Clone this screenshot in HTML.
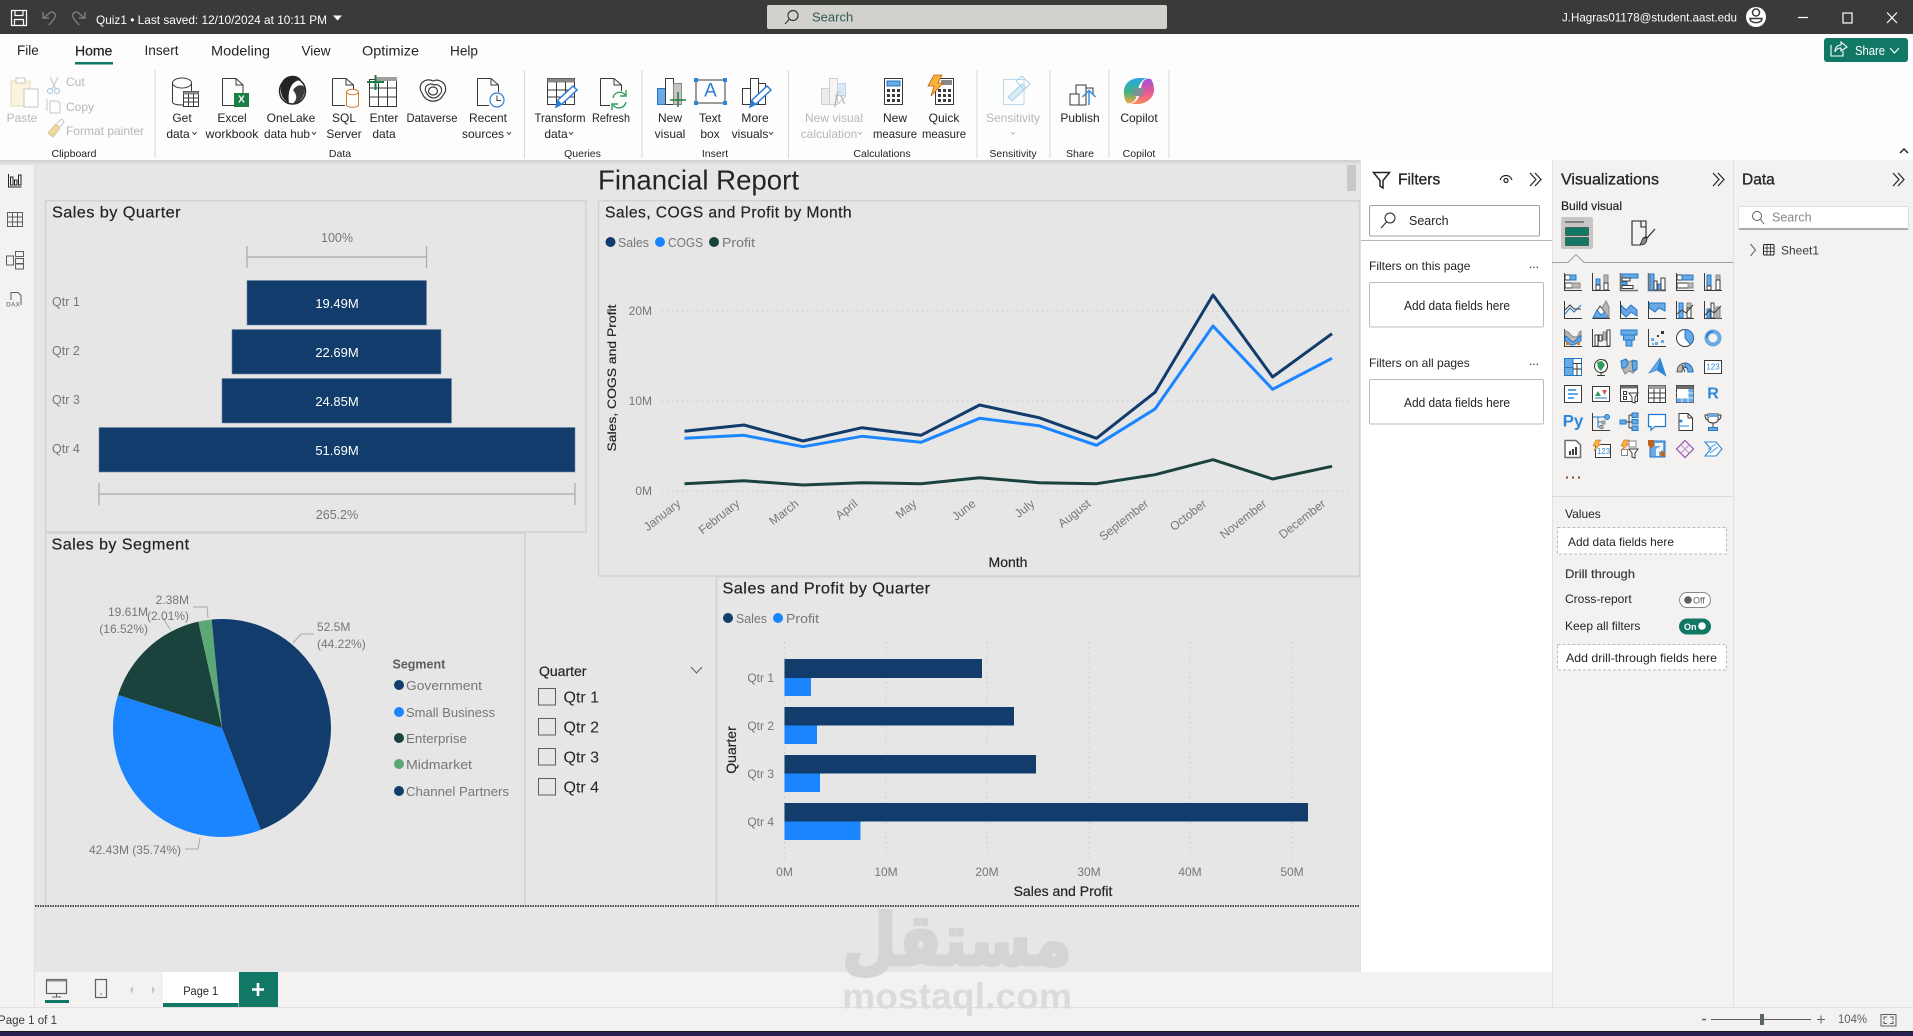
<!DOCTYPE html>
<html lang="en"><head><meta charset="utf-8"><title>Quiz1 - Power BI</title>
<style>
html,body{margin:0;padding:0;width:1913px;height:1036px;overflow:hidden;background:#e6e6e6}
svg{display:block}
text{font-family:"Liberation Sans","DejaVu Sans",sans-serif;dominant-baseline:central;fill:#252423;font-size:12px}
.c text,text.c{text-anchor:middle}
.d text,text.d{fill:#b9b7b5}
.gr text,text.gr{fill:#777}
.ttl{font-size:16px;fill:#252423;font-weight:400;letter-spacing:.4px}
.k{stroke:#3b3a39;fill:none;stroke-width:1}
.l{stroke:#3b3a39;fill:#fff;stroke-width:1}
.b{fill:#6aa9e4;stroke:#1f78c8;stroke-width:1}
.bb{fill:none;stroke:#1f78c8;stroke-width:1}
.g{fill:#b9b7b5;stroke:#8a8886;stroke-width:1}
.dis{stroke:#c8c6c4;fill:none;stroke-width:1}
.grid{stroke:#c9c9c9;stroke-width:1;stroke-dasharray:1.5 3.5;fill:none}
.fr{stroke:#d2d2d2;fill:none;stroke-width:1.5}
.br{stroke:#a8a8a8;fill:none;stroke-width:1.2}
</style></head><body>
<svg width="1913" height="1036" viewBox="0 0 1913 1036" xmlns="http://www.w3.org/2000/svg">
<defs>
<linearGradient id="sh" x1="0" y1="0" x2="0" y2="1"><stop offset="0" stop-color="#cfcfcf"/><stop offset="1" stop-color="#e6e6e6"/></linearGradient>
<linearGradient id="cp1" x1="0" y1="0" x2="0" y2="1"><stop offset="0" stop-color="#2aa7e8"/><stop offset=".55" stop-color="#3fb27f"/><stop offset="1" stop-color="#f4a83f"/></linearGradient>
<linearGradient id="cp2" x1="0" y1="0" x2="0" y2="1"><stop offset="0" stop-color="#9a55d8"/><stop offset=".5" stop-color="#e5559a"/><stop offset="1" stop-color="#f88a5a"/></linearGradient>
</defs>

<!-- base -->
<rect width="1913" height="1036" fill="#f3f2f1"/>
<rect x="35" y="160" width="1326" height="812" fill="#e6e6e6"/>
<rect x="0" y="160" width="1361" height="5" fill="url(#sh)"/>
<rect x="0" y="165" width="34" height="807" fill="#f3f2f1"/>
<path d="M34.5 165V1007" stroke="#e1dfdd"/>

<!-- title bar -->
<rect width="1913" height="34" fill="#3b3a39"/>
<g fill="none" stroke="#fff" stroke-width="1.2">
<path d="M11.5 10.5H26.5V25.5H11.5Z"/><path d="M15 10.5V15.5H23V10.5M14.5 25.5V19.5H23.5V25.5"/>
</g>
<g fill="none" stroke="#8a8886" stroke-width="1.2"><path d="M43 12V18H49M43.5 18L50 12.5C54 10.5 57 15 54 19L49 25"/><path d="M85 12V18H79M84.5 18L78 12.5C74 10.5 71 15 74 19L79 25"/></g>
<text x="96" y="20" style="fill:#fff" textLength="231" lengthAdjust="spacingAndGlyphs">Quiz1 • Last saved: 12/10/2024 at 10:11 PM</text>
<path d="M333 15.5H342L337.500 20.500Z" fill="#fff"/>
<rect x="767" y="5" width="400" height="24" rx="2" fill="#d2d1ce"/>
<circle cx="793" cy="15.500" r="5" fill="none" stroke="#3b3a39" stroke-width="1.2"/><path d="M789.500 19L785 24" stroke="#3b3a39" stroke-width="1.2"/>
<text x="812" y="17" style="fill:#335a55;font-size:13px">Search</text>
<text x="1562" y="17.500" style="fill:#fff" textLength="175" lengthAdjust="spacingAndGlyphs">J.Hagras01178@student.aast.edu</text>
<circle cx="1756" cy="17" r="10" fill="#fff"/><circle cx="1756" cy="12.500" r="3.500" fill="none" stroke="#3b3a39" stroke-width="1.500"/><path d="M1750 18.500H1762C1762 24 1750 24 1750 18.500Z" fill="none" stroke="#3b3a39" stroke-width="1.500"/>
<path d="M1798 17.500H1808" stroke="#fff" stroke-width="1.200"/>
<rect x="1843" y="13" width="9" height="10" fill="none" stroke="#fff" stroke-width="1.200"/>
<path d="M1887 12.500L1897 23M1897 12.500L1887 23" stroke="#fff" stroke-width="1.200"/>

<!-- ribbon -->
<rect y="34" width="1913" height="126" fill="#fdfdfd"/>
<text x="17" y="50.500" style="font-size:13.500px">File</text>
<text x="75" y="50.500" style="font-size:14px;stroke:#252423;stroke-width:.25">Home</text>
<text x="144.500" y="50.500" style="font-size:13.500px" textLength="34" lengthAdjust="spacingAndGlyphs">Insert</text>
<text x="211" y="50.500" style="font-size:14px" textLength="59" lengthAdjust="spacingAndGlyphs">Modeling</text>
<text x="301.500" y="50.500" style="font-size:14px" textLength="29" lengthAdjust="spacingAndGlyphs">View</text>
<text x="362" y="50.500" style="font-size:14px" textLength="57" lengthAdjust="spacingAndGlyphs">Optimize</text>
<text x="450" y="50.500" style="font-size:14px" textLength="28" lengthAdjust="spacingAndGlyphs">Help</text>
<rect x="75" y="62" width="38" height="2.500" fill="#117865"/>
<rect x="1824" y="38" width="84" height="24" rx="3" fill="#117865"/>
<g fill="none" stroke="#fff" stroke-width="1.100"><path d="M1831 45V56H1843V51"/><path d="M1835 52C1835 47 1838 45 1841 45V42L1847 47L1841 51V48C1838 48 1836 49 1835 52Z"/><path d="M1890 48L1894.500 53L1899 48"/></g>
<text x="1855" y="51" style="fill:#fff;font-size:12.500px" textLength="30" lengthAdjust="spacingAndGlyphs">Share</text>
<path d="M1900 153L1904 149L1908 153" fill="none" stroke="#252423" stroke-width="1.500"/>

<!-- ribbon dividers -->
<g stroke="#d9d8d6" stroke-width="1">
<path d="M155 70V158M524.500 70V158M642 70V158M788.500 70V158M977 70V158M1050 70V158M1109 70V158M1169 70V158"/>
</g>
<!-- group labels -->
<g class="c">
<text x="74" y="154" style="font-size:10.500px">Clipboard</text><text x="340" y="154" style="font-size:10.500px">Data</text><text x="582.500" y="154" style="font-size:10.500px">Queries</text><text x="715" y="154" style="font-size:10.500px">Insert</text><text x="882" y="154" style="font-size:10.500px">Calculations</text><text x="1013" y="154" style="font-size:10.500px">Sensitivity</text><text x="1080" y="154" style="font-size:10.500px">Share</text><text x="1139" y="154" style="font-size:10.500px">Copilot</text>
</g>
<!-- ribbon labels -->
<g class="c">
<text x="22" y="118" class="c d">Paste</text>
<text x="182" y="118">Get</text><text x="178" y="134">data</text>
<text x="232" y="118">Excel</text><text x="232" y="134" textLength="53" lengthAdjust="spacingAndGlyphs">workbook</text>
<text x="291" y="118">OneLake</text><text x="287" y="134" textLength="46" lengthAdjust="spacingAndGlyphs">data hub</text>
<text x="344" y="118">SQL</text><text x="344" y="134">Server</text>
<text x="384" y="118">Enter</text><text x="384" y="134">data</text>
<text x="432" y="118" textLength="51" lengthAdjust="spacingAndGlyphs">Dataverse</text>
<text x="488" y="118">Recent</text><text x="483" y="134">sources</text>
<text x="560" y="118" textLength="51" lengthAdjust="spacingAndGlyphs">Transform</text><text x="556" y="134">data</text>
<text x="611" y="118" textLength="38" lengthAdjust="spacingAndGlyphs">Refresh</text>
<text x="670" y="118">New</text><text x="670" y="134">visual</text>
<text x="710" y="118">Text</text><text x="710" y="134">box</text>
<text x="755" y="118">More</text><text x="750" y="134">visuals</text>
<text x="834" y="118" class="c d">New visual</text><text x="829" y="134" class="c d">calculation</text>
<text x="895" y="118">New</text><text x="895" y="134" textLength="44" lengthAdjust="spacingAndGlyphs">measure</text>
<text x="944" y="118">Quick</text><text x="944" y="134" textLength="44" lengthAdjust="spacingAndGlyphs">measure</text>
<text x="1013" y="118" class="c d">Sensitivity</text>
<text x="1080" y="118">Publish</text>
<text x="1139" y="118">Copilot</text>
</g>
<g fill="none" stroke="#3b3a39" stroke-width="1">
<path d="M192.500 132L194.500 134.500L196.500 132M312 132L314 134.500L316 132M507 132L509 134.500L511 132M569 132L571 134.500L573 132M769 132L771 134.500L773 132"/>
</g>
<path d="M858 132L860 134.500L862 132M1011 132L1013 134.500L1015 132" fill="none" stroke="#b9b7b5"/>

<!-- clipboard -->
<rect x="11" y="81" width="19" height="25" fill="#fbf3dd" stroke="#e6dcc0"/><rect x="16" y="78" width="9" height="5" fill="#fff" stroke="#c8c6c4"/><rect x="24" y="89" width="14" height="18" fill="#fff" stroke="#c8c6c4"/>
<path d="M50 77L56 89M58 77L52 89" class="dis"/><circle cx="50" cy="91" r="2.500" fill="none" stroke="#9fc4e2"/><circle cx="57" cy="91" r="2.500" fill="none" stroke="#9fc4e2"/>
<text x="66" y="82" class="d">Cut</text>
<path d="M50 101H58L60 103V113H50ZM47 99V111" class="dis"/>
<text x="66" y="107" class="d">Copy</text>
<path d="M48 133L56 124L60 128L53 137Z" fill="#f0d9a0" stroke="#d8c596"/><path d="M57 123L62 119L64 122L60 127" class="dis"/>
<text x="66" y="131" class="d">Format painter</text>

<!-- get data -->
<path d="M172.500 83V102C172.500 106 190 106 190 102M191.500 83V91" class="k"/><ellipse cx="182" cy="83" rx="9.500" ry="5" class="k"/>
<rect x="183.500" y="91.500" width="15" height="15" fill="#fff" stroke="#3b3a39"/><rect x="183.500" y="91.500" width="15" height="3" fill="#8a8886"/><path d="M183.500 98H198.500M183.500 102H198.500M188.500 94V106M193.500 94V106" class="k" stroke-width=".8"/>
<!-- excel -->
<path d="M222.500 78.500H236L243 85V93M236 78.500V85H243M234 105.500H222.500V78.500" class="k"/><rect x="234" y="93" width="15" height="14" fill="#1d7d44"/><text x="241.500" y="100" class="c" style="fill:#fff;font-size:10px;font-weight:700">X</text>
<!-- onelake -->
<circle cx="292.500" cy="91" r="13" fill="#fff" stroke="#252423" stroke-width="1.500"/><path d="M282 82C286 74 298 74 301 80C294 80 287 87 289 103C281 99 279 90 282 82Z" fill="#252423"/><path d="M293 90C297 84 303 84 305 88C305 98 298 104 292 104C299 99 296 94 293 90Z" fill="#3b3a39"/>
<!-- sql -->
<path d="M332.500 78.500H346L353.500 85V89M346 78.500V85H353.500M345 105.500H332.500V78.500" class="k"/><path d="M346.500 92V105C346.500 108 358.500 108 358.500 105V92" fill="#fff" stroke="#d57b2a"/><ellipse cx="352.500" cy="92" rx="6" ry="2.800" fill="#fff" stroke="#d57b2a"/>
<!-- enter data -->
<rect x="369.500" y="79.500" width="27" height="27" fill="#fff" stroke="#3b3a39"/><rect x="376" y="77" width="21" height="4" fill="#a19f9d"/><path d="M369.500 88H396.500M369.500 97H396.500M378.500 81V106.500M387.500 81V106.500" class="k"/><path d="M367 82H384M375.500 75V90" stroke="#1d7d44" stroke-width="2"/>
<!-- dataverse -->
<g fill="none" stroke="#3b3a39" stroke-width="1.200"><path d="M422 93C416 84 426 77 433 81C442 77 450 88 443 95C440 103 426 104 422 93Z"/><path d="M426 92C423 86 430 82 434 85C440 83 444 90 440 94C436 100 429 99 426 92Z"/><ellipse cx="433" cy="91" rx="4.500" ry="4"/></g>
<!-- recent -->
<path d="M477.500 78.500H491L498.500 85V92M491 78.500V85H498.500M489 105.500H477.500V78.500" class="k"/><circle cx="497" cy="100" r="7" fill="#fff" stroke="#2b7cd3" stroke-width="1.200"/><path d="M497 95.500V100.500H501" class="k"/>
<!-- transform -->
<rect x="547.500" y="78.500" width="27" height="26" fill="#fff" stroke="#3b3a39"/><rect x="547.500" y="78.500" width="27" height="4" fill="#8a8886"/><path d="M547.500 90H574.500M547.500 97H574.500M556.500 82V104.500M565.500 82V104.500" class="k"/><path d="M556 107L558 100L573 86L577 90L562 104Z" fill="#fff" stroke="#2b7cd3" stroke-width="1.500"/><path d="M556 107L558 100L562 104Z" fill="#2b7cd3"/>
<!-- refresh -->
<path d="M600.500 78.500H614L621.500 85V91M614 78.500V85H621.500M610 105.500H600.500V78.500" class="k"/><g fill="none" stroke="#2e9e5b" stroke-width="1.400"><path d="M613 98C614 92 622 90 625 95"/><path d="M626 90V96H620"/><path d="M626 102C625 108 617 110 613 105"/><path d="M612 110V104H618"/></g>
<!-- new visual -->
<rect x="657.500" y="88.500" width="8" height="16" fill="#6aa9e4" stroke="#1f78c8"/><rect x="665.500" y="78.500" width="8" height="26" fill="#fff" stroke="#3b3a39"/><rect x="673.500" y="83.500" width="8" height="21" fill="#c8c6c4" stroke="#8a8886"/><path d="M670 100H686M678 92V107" stroke="#1d7d44" stroke-width="1.500"/>
<!-- text box -->
<rect x="696" y="80" width="29" height="23" fill="#fff" stroke="#3b3a39"/><g fill="#2b88d8"><rect x="694" y="78" width="4" height="4"/><rect x="723" y="78" width="4" height="4"/><rect x="694" y="101" width="4" height="4"/><rect x="723" y="101" width="4" height="4"/></g><text x="710.500" y="91" class="c" style="fill:#2b7cd3;font-size:19px">A</text>
<!-- more visuals -->
<rect x="742.500" y="88.500" width="8" height="16" fill="#fff" stroke="#3b3a39"/><rect x="750.500" y="78.500" width="8" height="26" fill="#fff" stroke="#3b3a39"/><rect x="758.500" y="83.500" width="7" height="21" fill="#fff" stroke="#3b3a39"/><path d="M750 107L752 100L767 86L771 90L756 104Z" fill="#fff" stroke="#2b7cd3" stroke-width="1.500"/><path d="M750 107L752 100L756 104Z" fill="#2b7cd3"/>
<!-- new visual calc -->
<rect x="821.500" y="88.500" width="8" height="16" fill="#eceaea" stroke="#d2d0ce"/><rect x="829.500" y="78.500" width="8" height="26" fill="#f5f4f3" stroke="#d2d0ce"/><rect x="837.500" y="83.500" width="8" height="12" fill="#dbe9f6" stroke="#bcd5ec"/>
<text x="840" y="98" class="c" style="fill:#b9b7b5;font-size:17px;font-family:'Liberation Serif',serif;font-style:italic">fx</text>
<!-- new measure -->
<rect x="884.500" y="78.500" width="18" height="26" fill="#fff" stroke="#3b3a39"/><rect x="887" y="81" width="13" height="5" fill="#6aa9e4" stroke="#1f78c8"/><g fill="#3b3a39"><rect x="887" y="89" width="3" height="3"/><rect x="892" y="89" width="3" height="3"/><rect x="897" y="89" width="3" height="3"/><rect x="887" y="94" width="3" height="3"/><rect x="892" y="94" width="3" height="3"/><rect x="897" y="94" width="3" height="3"/><rect x="887" y="99" width="3" height="3"/><rect x="892" y="99" width="3" height="3"/><rect x="897" y="99" width="3" height="3"/></g>
<!-- quick measure -->
<rect x="935.500" y="78.500" width="18" height="26" fill="#fff" stroke="#3b3a39"/><rect x="941" y="80" width="11" height="5" fill="#8a8886"/><g fill="#3b3a39"><rect x="938" y="89" width="3" height="3"/><rect x="943" y="89" width="3" height="3"/><rect x="948" y="89" width="3" height="3"/><rect x="938" y="94" width="3" height="3"/><rect x="943" y="94" width="3" height="3"/><rect x="948" y="94" width="3" height="3"/><rect x="938" y="99" width="3" height="3"/><rect x="943" y="99" width="3" height="3"/><rect x="948" y="99" width="3" height="3"/></g>
<path d="M934 75H942L938 83H943L931 96L934 86H928Z" fill="#f7b23b" stroke="#c25b12" stroke-width=".8"/>
<!-- sensitivity -->
<path d="M1003.500 79.500H1024V104.500H1003.500Z" fill="none" stroke="#b8d9ee"/><path d="M1008 97L1022 84L1026 88L1012 101Z" fill="#dcecf7" stroke="#a9d1ea"/><path d="M1016 81L1022 76L1030 84L1024 90Z" fill="none" stroke="#a9d1ea"/>
<!-- publish -->
<g class="k"><path d="M1070 94H1079V105H1070ZM1076 94V85H1086V105H1079M1086 88H1093V94"/></g><path d="M1089 105V92M1082.500 97L1089 90.500L1095.500 97" fill="none" stroke="#2b88d8" stroke-width="1.400"/>
<!-- copilot -->
<path d="M1124 92C1124 82 1132 78 1140 78H1147C1141 80 1139 85 1138 90L1136 98C1134 103 1130 104 1127 103C1125 101 1124 97 1124 92Z" fill="url(#cp1)"/>
<path d="M1154 90C1154 98 1146 104 1138 104H1131C1137 102 1139 98 1140 92L1142 84C1144 79 1148 78 1151 79C1153 82 1154 86 1154 90Z" fill="url(#cp2)"/>
<path d="M1134 88H1144L1142 96H1133Z" fill="#7d8f9a"/>

<!-- left nav -->
<g class="k" stroke-width="1.200"><path d="M8.500 174V187H21.500" stroke="#252423"/><rect x="10.500" y="177" width="2.500" height="8" stroke="#252423" fill="none"/><rect x="14.500" y="180" width="2.500" height="5" stroke="#252423" fill="none"/><rect x="18.500" y="175" width="2.500" height="10" stroke="#252423" fill="none"/></g>
<g stroke="#605e5c" fill="none"><rect x="7.500" y="212.500" width="15" height="14"/><path d="M7.500 217H22.500M7.500 222H22.500M12.500 212.500V226.500M17.500 212.500V226.500"/>
<rect x="15.500" y="251.500" width="8" height="5"/><rect x="15.500" y="258.500" width="8" height="5"/><rect x="15.500" y="264" width="8" height="5"/><rect x="6.500" y="256" width="7" height="9"/>
<path d="M11 300V292.500H18L21 295.500V305"/></g>
<text x="13" y="305" class="c" style="fill:#8a8886;font-size:6.500px;font-weight:700">DAX</text>

<!-- report title -->
<text x="598" y="180" style="font-size:28px" textLength="201" lengthAdjust="spacingAndGlyphs">Financial Report</text>
<rect x="1347" y="165" width="9" height="26" fill="#c8c8c8"/>

<!-- frames -->
<rect x="45.500" y="200.700" width="540.500" height="331.300" class="fr"/>
<path d="M45.600 533V906M45.600 533H525V906" class="fr"/>
<rect x="598.500" y="200.700" width="761" height="375.300" class="fr"/>
<path d="M716.500 576.700V906M716.500 576.700H1360" class="fr"/>

<!-- Sales by Quarter -->
<text x="52" y="213" class="ttl" textLength="129" lengthAdjust="spacingAndGlyphs" style="stroke:#252423;stroke-width:.2">Sales by Quarter</text>
<text x="337" y="238" class="c gr" style="font-size:12.500px">100%</text>
<path d="M247 246V268M247 257H426.500M426.500 246V268" class="br"/>
<g fill="#113c6c" stroke="#6d86a6" stroke-width=".6">
<rect x="247" y="280.500" width="179.500" height="44.500"/><rect x="232" y="329.500" width="209" height="44.500"/><rect x="222" y="378.500" width="229.500" height="44.500"/><rect x="99" y="427.500" width="476" height="44.500"/>
</g>
<g class="c"><text x="337" y="303.500" style="fill:#fff;font-size:13px">19.49M</text><text x="337" y="352.500" style="fill:#fff;font-size:13px">22.69M</text><text x="337" y="401.500" style="fill:#fff;font-size:13px">24.85M</text><text x="337" y="450.500" style="fill:#fff;font-size:13px">51.69M</text></g>
<text x="52" y="302" class="gr" style="font-size:12.500px">Qtr 1</text><text x="52" y="351" class="gr" style="font-size:12.500px">Qtr 2</text><text x="52" y="400" class="gr" style="font-size:12.500px">Qtr 3</text><text x="52" y="449" class="gr" style="font-size:12.500px">Qtr 4</text>
<path d="M99 483V505M99 494H575M575 483V505" class="br"/>
<text x="337" y="515" class="c gr" style="font-size:12.500px">265.2%</text>

<!-- Line chart -->
<text x="605" y="213" class="ttl" textLength="247" lengthAdjust="spacingAndGlyphs" style="stroke:#252423;stroke-width:.2">Sales, COGS and Profit by Month</text>
<circle cx="610.500" cy="242" r="5" fill="#113c6c"/><text x="618" y="242.500" class="gr" style="font-size:13px" textLength="31" lengthAdjust="spacingAndGlyphs">Sales</text>
<circle cx="660" cy="242" r="5" fill="#1b85ff"/><text x="668" y="242.500" class="gr" style="font-size:13px" textLength="35" lengthAdjust="spacingAndGlyphs">COGS</text>
<circle cx="714" cy="242" r="5" fill="#1b433e"/><text x="722" y="242.500" class="gr" style="font-size:13px" textLength="33" lengthAdjust="spacingAndGlyphs">Profit</text>
<text transform="translate(612,378) rotate(-90)" class="c" style="font-size:12px;stroke:#252423;stroke-width:.2" textLength="147" lengthAdjust="spacingAndGlyphs">Sales, COGS and Profit</text>
<path d="M662 311H1351M662 401H1351M662 491H1351" class="grid"/>
<text x="652" y="311" class="gr" style="text-anchor:end">20M</text><text x="652" y="401" class="gr" style="text-anchor:end">10M</text><text x="652" y="491" class="gr" style="text-anchor:end">0M</text>
<polyline fill="none" stroke="#1b433e" stroke-width="3" stroke-linejoin="round" points="684.500,483.700 744,480.700 803,485 862,482.700 921,483.700 979.600,477.700 1039,482.700 1096.500,483.700 1155,474.700 1213,459.700 1272.600,479 1332,466.300"/>
<polyline fill="none" stroke="#1b85ff" stroke-width="3" stroke-linejoin="round" points="684.500,438.300 744,435.300 803,446.700 862,436.300 921,442.300 979.600,418.300 1039,425.700 1096.500,445.300 1155,409 1213,326 1272.600,389.300 1332,358.300"/>
<polyline fill="none" stroke="#113c6c" stroke-width="3" stroke-linejoin="round" points="684.500,431.300 744,425 803,441 862,427.700 921,435.300 979.600,405 1039,417.700 1096.500,438.300 1155,392.300 1213,295 1272.600,377 1332,333.700"/>
<g style="font-size:12.500px">
<text transform="translate(679,502) rotate(-38)" class="gr" style="text-anchor:end">January</text>
<text transform="translate(738,502) rotate(-38)" class="gr" style="text-anchor:end">February</text>
<text transform="translate(797,502) rotate(-38)" class="gr" style="text-anchor:end">March</text>
<text transform="translate(856,502) rotate(-38)" class="gr" style="text-anchor:end">April</text>
<text transform="translate(915,502) rotate(-38)" class="gr" style="text-anchor:end">May</text>
<text transform="translate(974,502) rotate(-38)" class="gr" style="text-anchor:end">June</text>
<text transform="translate(1033,502) rotate(-38)" class="gr" style="text-anchor:end">July</text>
<text transform="translate(1089,502) rotate(-38)" class="gr" style="text-anchor:end">August</text>
<text transform="translate(1147,502) rotate(-38)" class="gr" style="text-anchor:end">September</text>
<text transform="translate(1205,502) rotate(-38)" class="gr" style="text-anchor:end">October</text>
<text transform="translate(1265,502) rotate(-38)" class="gr" style="text-anchor:end">November</text>
<text transform="translate(1324,502) rotate(-38)" class="gr" style="text-anchor:end">December</text>
</g>
<text x="1008" y="562" class="c" style="font-size:14px;stroke:#252423;stroke-width:.2">Month</text>

<!-- Sales by Segment -->
<text x="51.500" y="545" class="ttl" textLength="138" lengthAdjust="spacingAndGlyphs" style="stroke:#252423;stroke-width:.2">Sales by Segment</text>
<g transform="translate(222,728)">
<path d="M0 0L0 -109A109 109 0 0 1 38.700 101.900Z" fill="#113c6c"/>
<path d="M0 0L38.700 101.900A109 109 0 0 1 -103.900 -33Z" fill="#1b85ff"/>
<path d="M0 0L-103.900 -33A109 109 0 0 1 -23.700 -106.400Z" fill="#1b433e"/>
<path d="M0 0L-23.700 -106.400A109 109 0 0 1 -10.300 -108.500Z" fill="#5ba874"/>
<path d="M0 0L-10.300 -108.500A109 109 0 0 1 0 -109Z" fill="#113c6c"/>
</g>
<g fill="none" stroke="#a8a8a8"><path d="M293 643L301 634H313.500M193 607H207L208 618M163 618L170.600 630M185 849H198L200 838"/></g>
<text x="317" y="627" class="gr">52.5M</text><text x="317" y="644" class="gr">(44.22%)</text>
<text x="189" y="600" class="gr" style="text-anchor:end">2.38M</text><text x="189" y="616" class="gr" style="text-anchor:end">(2.01%)</text>
<text x="148" y="612" class="gr" style="text-anchor:end">19.61M</text><text x="148" y="629" class="gr" style="text-anchor:end">(16.52%)</text>
<text x="181" y="850" class="gr" style="text-anchor:end">42.43M (35.74%)</text>
<text x="392.500" y="664.500" style="fill:#605e5c;font-weight:700;font-size:12.500px">Segment</text>
<circle cx="399" cy="685" r="5" fill="#113c6c"/><text x="406" y="685.500" class="gr" style="font-size:13px" textLength="76" lengthAdjust="spacingAndGlyphs">Government</text>
<circle cx="399" cy="712" r="5" fill="#1b85ff"/><text x="406" y="712.500" class="gr" style="font-size:13px" textLength="89" lengthAdjust="spacingAndGlyphs">Small Business</text>
<circle cx="399" cy="738" r="5" fill="#1b433e"/><text x="406" y="738.500" class="gr" style="font-size:13px" textLength="61" lengthAdjust="spacingAndGlyphs">Enterprise</text>
<circle cx="399" cy="764" r="5" fill="#5ba874"/><text x="406" y="764.500" class="gr" style="font-size:13px" textLength="66" lengthAdjust="spacingAndGlyphs">Midmarket</text>
<circle cx="399" cy="791" r="5" fill="#113c6c"/><text x="406" y="791.500" class="gr" style="font-size:13px" textLength="103" lengthAdjust="spacingAndGlyphs">Channel Partners</text>

<!-- Slicer -->
<text x="539" y="671" style="font-size:14px;stroke:#252423;stroke-width:.2">Quarter</text>
<path d="M691 667L696.500 673L702 667" fill="none" stroke="#605e5c"/>
<g fill="none" stroke="#605e5c" stroke-width="1"><rect x="538.500" y="688.500" width="17" height="16.500"/><rect x="538.500" y="718.500" width="17" height="16.500"/><rect x="538.500" y="748.500" width="17" height="16.500"/><rect x="538.500" y="778.500" width="17" height="16.500"/></g>
<text x="563.500" y="698" style="font-size:16px">Qtr 1</text><text x="563.500" y="728" style="font-size:16px">Qtr 2</text><text x="563.500" y="758" style="font-size:16px">Qtr 3</text><text x="563.500" y="788" style="font-size:16px">Qtr 4</text>

<!-- Bar chart -->
<text x="722.500" y="589" class="ttl" textLength="208" lengthAdjust="spacingAndGlyphs" style="stroke:#252423;stroke-width:.2">Sales and Profit by Quarter</text>
<circle cx="728" cy="618" r="5" fill="#113c6c"/><text x="736" y="618.500" class="gr" style="font-size:13px" textLength="31" lengthAdjust="spacingAndGlyphs">Sales</text>
<circle cx="778" cy="618" r="5" fill="#1b85ff"/><text x="786" y="618.500" class="gr" style="font-size:13px" textLength="33" lengthAdjust="spacingAndGlyphs">Profit</text>
<path d="M784.500 642V860M886 642V860M987 642V860M1089 642V860M1190 642V860M1292 642V860" class="grid"/>
<g fill="#113c6c"><rect x="784.500" y="659" width="197.500" height="19"/><rect x="784.500" y="707" width="229.500" height="18.500"/><rect x="784.500" y="755" width="251.500" height="18.500"/><rect x="784.500" y="803" width="523.500" height="18.500"/></g>
<g fill="#1b85ff"><rect x="784.500" y="678" width="26.500" height="18"/><rect x="784.500" y="725.500" width="32.500" height="18.500"/><rect x="784.500" y="773.500" width="35.500" height="18.500"/><rect x="784.500" y="821.500" width="76" height="18.500"/></g>
<text x="774" y="678" class="gr" style="text-anchor:end">Qtr 1</text><text x="774" y="726" class="gr" style="text-anchor:end">Qtr 2</text><text x="774" y="774" class="gr" style="text-anchor:end">Qtr 3</text><text x="774" y="822" class="gr" style="text-anchor:end">Qtr 4</text>
<text transform="translate(731,750) rotate(-90)" class="c" style="font-size:14px;stroke:#252423;stroke-width:.2">Quarter</text>
<text x="784.500" y="872" class="c gr">0M</text><text x="886" y="872" class="c gr">10M</text><text x="987" y="872" class="c gr">20M</text><text x="1089" y="872" class="c gr">30M</text><text x="1190" y="872" class="c gr">40M</text><text x="1292" y="872" class="c gr">50M</text>
<text x="1063" y="891" class="c" style="font-size:14px;stroke:#252423;stroke-width:.2">Sales and Profit</text>

<!-- page boundary -->
<path d="M35 906H1360" stroke="#4a4a4a" stroke-width="2" stroke-dasharray="1.500 1"/>

<!-- page tabs -->
<rect x="35" y="972" width="1326" height="35" fill="#f3f2f1"/>
<rect x="46.500" y="979.500" width="20" height="14" fill="#f3f2f1" stroke="#605e5c" stroke-width="1.200"/><rect x="46.500" y="979.500" width="20" height="2" fill="#8a8886"/><path d="M56.500 993.500V997M52 997H61" stroke="#605e5c"/>
<rect x="45" y="1000" width="24" height="3" fill="#117865"/>
<rect x="95.500" y="979.500" width="11" height="18" fill="none" stroke="#605e5c" stroke-width="1.200"/><circle cx="101" cy="994" r=".8" fill="#605e5c"/>
<path d="M133 986L130 990L133 994Z M152 986L155 990L152 994Z" fill="#c8c6c4"/>
<rect x="163" y="972" width="75.500" height="35" fill="#fff"/><rect x="163" y="1003" width="75.500" height="4" fill="#117865"/>
<text x="200.700" y="991" class="c" textLength="35" lengthAdjust="spacingAndGlyphs">Page 1</text>
<rect x="239" y="972" width="39" height="35" fill="#117865"/><path d="M258 983V996M252 989.500H264" stroke="#fff" stroke-width="2.600"/>

<!-- right panes -->
<rect x="1361" y="160" width="191" height="812" fill="#fff"/>
<path d="M1360.500 160V972" stroke="#e1dfdd"/>
<rect x="1552" y="160" width="181" height="847" fill="#f3f2f1"/>
<path d="M1552.500 160V1007M1733.500 160V1007" stroke="#e1dfdd"/>

<!-- filters pane -->
<path d="M1373.500 172.500H1389.500L1383 180.500V188L1380 186V180.500Z" fill="none" stroke="#252423" stroke-width="1.500"/>
<text x="1398" y="180" style="font-size:15.500px;stroke:#252423;stroke-width:.3">Filters</text>
<path d="M1500 180C1502 174 1510 174 1512 180" fill="none" stroke="#252423" stroke-width="1.200"/><circle cx="1506" cy="180.500" r="2" fill="none" stroke="#252423" stroke-width="1.200"/>
<path d="M1530 173L1536 179.500L1530 186M1535 173L1541 179.500L1535 186" fill="none" stroke="#252423" stroke-width="1.200"/>
<rect x="1369.500" y="205.500" width="170" height="30.500" rx="1.500" fill="#fff" stroke="#a19f9d"/>
<circle cx="1390" cy="218" r="5" fill="none" stroke="#252423"/><path d="M1386.500 222L1381 228" stroke="#252423"/>
<text x="1409" y="221" style="font-size:12.500px">Search</text>
<path d="M1361 240.500H1552" stroke="#b8b6b4"/>
<text x="1369" y="266">Filters on this page</text>
<text x="1534" y="264" class="c" style="font-size:12px">...</text>
<rect x="1369.500" y="282.500" width="174" height="44.500" rx="1.500" fill="#fff" stroke="#bdbbb9"/>
<text x="1457" y="306" class="c" style="font-size:12.500px" textLength="106" lengthAdjust="spacingAndGlyphs">Add data fields here</text>
<text x="1369" y="363">Filters on all pages</text>
<text x="1534" y="361" class="c" style="font-size:12px">...</text>
<rect x="1369.500" y="379.500" width="174" height="44.500" rx="1.500" fill="#fff" stroke="#bdbbb9"/>
<text x="1457" y="403" class="c" style="font-size:12.500px" textLength="106" lengthAdjust="spacingAndGlyphs">Add data fields here</text>

<!-- viz pane -->
<text x="1561" y="180" style="font-size:15.500px;stroke:#252423;stroke-width:.3" textLength="98" lengthAdjust="spacingAndGlyphs">Visualizations</text>
<path d="M1713 173L1719 179.500L1713 186M1718 173L1724 179.500L1718 186" fill="none" stroke="#252423" stroke-width="1.200"/>
<text x="1561" y="206" style="font-size:12px;stroke:#252423;stroke-width:.2" textLength="61" lengthAdjust="spacingAndGlyphs">Build visual</text>
<rect x="1561" y="217" width="32" height="32" rx="2" fill="#c8c6c4"/>
<path d="M1565 222H1584" stroke="#3b3a39"/>
<rect x="1565.500" y="227.500" width="23" height="8" fill="#117865" stroke="#252423" stroke-dasharray="1 1"/>
<rect x="1565.500" y="237.500" width="23" height="8" fill="#117865" stroke="#252423" stroke-dasharray="1 1"/>
<path d="M1646 240V221H1632V245H1640M1641 221V227H1646" fill="none" stroke="#252423" stroke-width="1.100"/>
<path d="M1642 242C1643 237 1646 236 1647 238L1655 229" fill="none" stroke="#252423" stroke-width="1.100"/><path d="M1640 245C1644 245 1647 243 1647 238L1643 238Z" fill="#8a8886" stroke="#252423" stroke-width=".8"/>
<path d="M1552 262.500H1568L1576 254.500L1584 262.500H1733" fill="#f3f2f1" stroke="#a19f9d"/>

<!-- viz icons row 1 -->
<g transform="translate(1564,273)"><path class="k" d="M.5 0V17.500H18"/><rect class="l" x="1" y="2" width="5" height="5"/><rect class="b" x="6" y="2" width="6" height="5"/><rect class="l" x="1" y="10" width="7" height="5"/><rect class="g" x="8" y="10" width="8" height="5"/></g>
<g transform="translate(1592,273)"><path class="k" d="M.5 0V17.500H18"/><rect class="b" x="4" y="6" width="4" height="6"/><rect class="l" x="4" y="12" width="4" height="5"/><rect class="g" x="12" y="2" width="4" height="8"/><rect class="l" x="12" y="10" width="4" height="7"/></g>
<g transform="translate(1620,273)"><path d="M.500 0V17.500H18" fill="none" stroke="#6e6c6a" stroke-width="1.500"/><rect class="b" x="2" y="1" width="16" height="4"/><rect class="l" x="2" y="5" width="8" height="3"/><rect class="b" x="2" y="9" width="5" height="3"/><rect class="l" x="2" y="12.500" width="11" height="3"/></g>
<g transform="translate(1648,273)"><path d="M.500 0V17.500H18" fill="none" stroke="#6e6c6a" stroke-width="1.500"/><rect class="b" x="2" y="1" width="4" height="16"/><rect class="l" x="6" y="8" width="3" height="9"/><rect class="b" x="10" y="11" width="3" height="6"/><rect class="l" x="13" y="5" width="4" height="12"/></g>
<g transform="translate(1676,273)"><path class="k" d="M.5 0V17.500H18"/><rect class="l" x="1" y="2" width="5" height="5"/><rect class="b" x="6" y="2" width="11" height="5"/><rect class="l" x="1" y="10" width="11" height="5"/><rect class="g" x="12" y="10" width="5" height="5"/></g>
<g transform="translate(1704,273)"><path class="k" d="M.5 0V17.500H18"/><rect class="b" x="3" y="2" width="4" height="11"/><rect class="l" x="3" y="13" width="4" height="4"/><rect class="g" x="12" y="2" width="4" height="5"/><rect class="l" x="12" y="7" width="4" height="10"/></g>
<!-- row 2 -->
<g transform="translate(1564,301)"><path class="k" d="M.5 0V17.500H18"/><path d="M1 13L6 7L10 11L17 4" class="bb" stroke-width="1.200"/><path d="M1 9L6 4L10 8L17 8" class="k"/></g>
<g transform="translate(1592,301)"><path d="M1 17L8 5L17 17Z" fill="#fff" stroke="#3b3a39"/><path d="M1 17L5 9L9 14L13 11L17 17Z" class="b"/><path d="M10 7L14 0L17 6V17L13 11Z" class="g"/><path class="k" d="M.5 17.500H18"/></g>
<g transform="translate(1620,301)"><path d="M1 4L6 9L11 4L17 9V15L11 11L6 16L1 11Z" class="b"/><path class="k" d="M.5 0V17.500H18"/></g>
<g transform="translate(1648,301)"><path d="M1 2H17V10L11 7L7 11L1 7Z" class="b"/><path class="k" d="M.5 0V17.500H18"/></g>
<g transform="translate(1676,301)"><path class="k" d="M.5 0V17.500H18"/><rect class="b" x="3" y="2" width="4" height="15"/><rect class="g" x="11" y="2" width="4" height="5"/><rect class="l" x="11" y="7" width="4" height="10"/><path class="k" d="M1 13L6 9L10 12L17 4"/></g>
<g transform="translate(1704,301)"><path class="k" d="M.5 0V17.500H18"/><rect class="b" x="3" y="8" width="3" height="9"/><rect class="l" x="7" y="2" width="3" height="15"/><rect class="g" x="12" y="6" width="4" height="11"/><path class="k" d="M1 14L6 9L10 12L17 5"/></g>
<!-- row 3 -->
<g transform="translate(1564,329)"><path class="k" d="M.5 0V17.500H18"/><path d="M1 2C6 2 6 8 11 8S14 2 17 2V6C14 6 13 13 8 13S5 8 1 7Z" class="g"/><path d="M1 7C5 8 6 13 9 13S14 7 17 7V12C14 12 12 16 8 16S4 12 1 12Z" class="b"/><rect x="2" y="13" width="3" height="3" fill="#d57b2a"/><rect x="13" y="13" width="3" height="3" fill="#d57b2a"/></g>
<g transform="translate(1592,329)"><path class="k" d="M.5 0V17.500H18"/><rect class="l" x="3" y="6" width="3" height="11"/><rect class="k" x="7" y="6" width="3" height="6"/><rect class="g" x="11" y="3" width="3" height="8"/><rect class="l" x="15" y="1" width="3" height="16"/></g>
<g transform="translate(1620,329)"><rect class="b" x="1" y="1" width="16" height="5"/><rect class="b" x="3.500" y="6" width="11" height="5"/><rect class="b" x="6" y="11" width="6" height="6"/></g>
<g transform="translate(1648,329)"><path class="k" d="M.5 0V17.500H18"/><rect x="3" y="9" width="3" height="3" fill="#6aa9e4"/><rect x="7" y="13" width="3" height="3" fill="#6aa9e4"/><rect x="13" y="11" width="3" height="3" fill="#6aa9e4"/><rect x="4" y="14" width="2" height="2" fill="#6aa9e4"/><rect x="13" y="2" width="3" height="3" fill="#3b3a39"/><rect x="9" y="6" width="2" height="2" fill="#3b3a39"/></g>
<g transform="translate(1676,329)"><circle cx="9" cy="9" r="8.500" fill="#fff" stroke="#3b3a39"/><path d="M9 .500A8.500 8.500 0 0 1 14.500 15.500L9 9Z" class="b"/></g>
<g transform="translate(1704,329)"><circle cx="9" cy="9" r="6.500" fill="none" stroke="#6aa9e4" stroke-width="4"/><path d="M2.500 9A6.500 6.500 0 0 1 9 2.500" fill="none" stroke="#1f78c8" stroke-width="1.500"/></g>
<!-- row 4 -->
<g transform="translate(1564,358)"><rect x=".5" y=".5" width="17" height="17" fill="#fff" stroke="#1f78c8"/><rect class="b" x=".5" y=".5" width="8.500" height="9"/><rect class="b" x=".5" y="9.500" width="8.500" height="8"/><path d="M9 5.500H17.500M13 5.500V17.500M9 11H17.500" class="k"/></g>
<g transform="translate(1592,358)"><circle cx="9" cy="8" r="6.500" fill="#fff" stroke="#3b3a39"/><path d="M5 4L10 3L13 7L9 13L6 10Z" fill="#2e9e5b"/><path d="M12 1.500C18 6 16 14 9 15M9 15V17.500M5 17.500H13" class="k"/></g>
<g transform="translate(1620,358)"><path d="M1 3L6 1L9 4L13 2L17 3V11L13 15L9 13L5 16L2 10Z" class="g"/><path d="M1 3L6 1L8 6L5 10L2 10Z" class="b"/><path d="M12 3L17 3V11L13 13Z" class="b"/></g>
<g transform="translate(1648,358)"><path d="M12 0L18 18L9 12L1 15Z" fill="#6aa9e4" stroke="#1f78c8" stroke-width=".6"/><path d="M12 0L18 18L9 12Z" fill="#2b88d8"/></g>
<g transform="translate(1676,358)"><path d="M1 14C1 2 17 2 17 14H12C12 8 6 8 6 14Z" fill="#b9b7b5" stroke="#3b3a39" stroke-width=".8"/><path d="M9 5C13 5 17 9 17 14H12C12 11 11 9 9 8.500Z" class="b"/><path d="M9 14L6 7" class="k"/></g>
<g transform="translate(1704,358)"><rect x=".5" y="2.500" width="17" height="13" fill="#fff" stroke="#3b3a39"/><text x="9" y="9" class="c" style="fill:#2b88d8;font-size:8px">123</text></g>
<!-- row 5 -->
<g transform="translate(1564,385)"><rect x=".5" y=".5" width="17" height="17" fill="#fff" stroke="#3b3a39"/><path d="M4 5H12M4 9H14M4 13H10" stroke="#2b88d8" stroke-width="1.500"/></g>
<g transform="translate(1592,385)"><rect x=".5" y="1.500" width="17" height="15" fill="#fff" stroke="#3b3a39"/><path d="M3 11L6 6L9 11Z" fill="#2e9e5b"/><path d="M10 5H15L12.500 10Z" fill="#e0574f"/><path d="M3 13H15" class="bb"/></g>
<g transform="translate(1620,385)"><rect x=".5" y=".5" width="17" height="16" fill="#fff" stroke="#3b3a39"/><rect x=".5" y=".5" width="17" height="3" fill="#6e6c6a"/><rect class="k" x="3.500" y="6.500" width="3" height="3"/><rect class="k" x="3.500" y="11.500" width="3" height="3"/><path d="M9 8H18L15 12V18L12 17V12Z" fill="#fff" stroke="#3b3a39"/></g>
<g transform="translate(1648,385)"><rect x=".5" y=".5" width="17" height="17" fill="#fff" stroke="#3b3a39"/><rect x=".5" y=".5" width="17" height="3.500" fill="#a19f9d"/><path d="M.5 8H17.500M.5 13H17.500M6 4V17.500M12 4V17.500" class="k" stroke-width=".8"/></g>
<g transform="translate(1676,385)"><rect x=".5" y=".5" width="17" height="17" fill="#fff" stroke="#3b3a39"/><rect x=".5" y=".5" width="17" height="3.500" fill="#6e6c6a"/><rect x="12" y="4" width="5.500" height="13.500" fill="#6aa9e4"/><rect x=".5" y="13" width="17" height="4.500" fill="#6aa9e4"/><path d="M.5 8H17.500M.5 13H17.500M6 4V17.500M12 4V17.500" stroke="#fff" stroke-width=".8"/></g>
<text x="1713" y="394" class="c" style="fill:#2b88d8;font-size:16px;font-weight:700">R</text>
<!-- row 6 -->
<text x="1573" y="421" class="c" style="fill:#2b88d8;font-size:17px;font-weight:700">Py</text>
<g transform="translate(1592,413)"><path class="k" d="M.5 0V17.500H18"/><path d="M1 4H15M6 4V9H10M6 9V14H8" class="bb" stroke="#3b3a39"/><circle cx="15" cy="4" r="2.500" class="b"/><rect class="g" x="10" y="8" width="3" height="3"/><rect class="g" x="8" y="12.500" width="3" height="3"/></g>
<g transform="translate(1620,413)"><rect class="b" x="0" y="7" width="6" height="4"/><rect class="b" x="12" y="0" width="6" height="4.500"/><rect class="b" x="12" y="6.500" width="6" height="4.500"/><rect class="b" x="12" y="13" width="6" height="4.500"/><path d="M6 9H12M9 2V15M9 2H12M9 15H12" class="k"/></g>
<g transform="translate(1648,413)"><path d="M.5 1.500H17.500V13.500H7L3 17V13.500H.5Z" fill="#fff" stroke="#1f78c8" stroke-width="1.200"/></g>
<g transform="translate(1676,413)"><path d="M3 .5H12L16.500 5V17.500H3Z" fill="#fff" stroke="#3b3a39"/><path d="M12 .5V5H16.500" class="k"/><circle cx="5" cy="8" r="1.500" fill="#2b88d8"/><path d="M4 13H13" stroke="#2b88d8"/></g>
<g transform="translate(1704,413)"><path d="M4 1H14V7C14 11 4 11 4 7Z" fill="#fff" stroke="#3b3a39"/><path d="M4 2H1C1 6 3 7 4 7M14 2H17C17 6 15 7 14 7M9 10V14" class="k"/><rect x="4" y="1" width="10" height="3" fill="#6aa9e4"/><rect x="4.500" y="14.500" width="9" height="3" fill="#6aa9e4" stroke="#1f78c8"/></g>
<!-- row 7 -->
<g transform="translate(1564,440)"><path d="M1 .5H12L16.500 5V17.500H1Z" fill="#fff" stroke="#6e6c6a" stroke-width="1.500"/><rect x="5" y="11" width="2" height="4" fill="#3b3a39"/><rect x="8" y="9" width="2" height="6" fill="#3b3a39"/><rect x="11" y="7" width="2" height="8" fill="#3b3a39"/></g>
<g transform="translate(1592,440)"><rect x="3.500" y="4.500" width="15" height="13" fill="#fff" stroke="#3b3a39"/><text x="11.500" y="11.500" class="c" style="fill:#2b88d8;font-size:8px">123</text><path d="M4 0H9L6 4H9L2 11L4 6H1Z" fill="#f7b23b" stroke="#c25b12" stroke-width=".5"/></g>
<g transform="translate(1620,440)"><rect class="g" x="9" y="1" width="7" height="6" style="fill:#fff"/><rect x="1.500" y="9.500" width="6" height="6" fill="#fff" stroke="#8a8886"/><path d="M9 9H18L15 13V18L12 17V13Z" fill="#fff" stroke="#3b3a39"/><path d="M4 0H9L6 4H9L2 10L4 6H1Z" fill="#f7b23b" stroke="#c25b12" stroke-width=".5"/></g>
<g transform="translate(1648,440)"><rect x="2" y="1" width="15" height="16" fill="#6aa9e4" stroke="#1f78c8"/><path d="M7 3H15V10L11 12V16L8 16V9L13 6H7Z" fill="#f3f2f1"/><path d="M0 0H6V5L3 9L0 5Z" fill="#c0621a"/><circle cx="15" cy="14" r="2.500" fill="#c0621a"/></g>
<g transform="translate(1676,440)"><path d="M9 .5L17.500 9L9 17.500L.5 9Z" fill="none" stroke="#9b4fb3" stroke-width="1.200"/><path d="M5 5L13 13M13 5L5 13" stroke="#c9a3d6" stroke-width="1.500"/></g>
<g transform="translate(1704,440)"><path d="M1 2H12L18 9L12 16H1L7 9Z" fill="#fff" stroke="#2b88d8" stroke-width="1.100"/><path d="M4 9L12 4M6 13L14 7" stroke="#6aa9e4" stroke-width="1.200"/></g>
<g fill="#8a4a2a"><rect x="1566" y="476.500" width="2" height="2"/><rect x="1572" y="476.500" width="2" height="2"/><rect x="1578" y="476.500" width="2" height="2"/></g>

<path d="M1552 496.500H1733" stroke="#dedcda"/>
<text x="1565" y="514">Values</text>
<rect x="1557.500" y="527.500" width="169" height="26.500" fill="#fff" stroke="#bdbbb9" stroke-dasharray="3 2"/>
<text x="1568" y="542" textLength="106" lengthAdjust="spacingAndGlyphs">Add data fields here</text>
<text x="1565" y="574" style="fill:#3b3a39;stroke:#3b3a39;stroke-width:.2" textLength="70" lengthAdjust="spacingAndGlyphs">Drill through</text>
<text x="1565" y="599">Cross-report</text>
<rect x="1679.500" y="592.500" width="31" height="15" rx="7.500" fill="#fff" stroke="#8a8886"/><circle cx="1688" cy="600" r="3.800" fill="#605e5c"/><text x="1693" y="600.500" style="font-size:9px;fill:#605e5c">Off</text>
<text x="1565" y="626">Keep all filters</text>
<rect x="1679" y="618.500" width="32" height="16" rx="8" fill="#117865"/><circle cx="1702" cy="626" r="3.800" fill="#fff"/><text x="1684" y="627" style="font-size:9px;fill:#fff;font-weight:700">On</text>
<rect x="1557.500" y="644.500" width="169" height="25.500" fill="#fff" stroke="#bdbbb9" stroke-dasharray="3 2"/>
<text x="1566" y="658" textLength="151" lengthAdjust="spacingAndGlyphs">Add drill-through fields here</text>

<!-- data pane -->
<text x="1742" y="180" style="font-size:15.500px;stroke:#252423;stroke-width:.3">Data</text>
<path d="M1893 173L1899 179.500L1893 186M1898 173L1904 179.500L1898 186" fill="none" stroke="#252423" stroke-width="1.200"/>
<rect x="1738.500" y="206.500" width="170" height="22.500" rx="2" fill="#fff" stroke="#e1dfdd"/><path d="M1739 229H1908" stroke="#605e5c"/>
<circle cx="1757" cy="216" r="4.500" fill="none" stroke="#605e5c"/><path d="M1760.500 219.500L1764 224" stroke="#605e5c"/>
<text x="1772" y="217.500" style="fill:#8a8886;font-size:12.500px">Search</text>
<path d="M1750.500 244L1755.500 250L1750.500 256" fill="none" stroke="#605e5c"/>
<rect x="1763.500" y="244.500" width="10.500" height="10.500" rx="1" fill="none" stroke="#252423"/><path d="M1763.500 248H1774M1763.500 251.500H1774M1767 244.500V255M1770.500 244.500V255" stroke="#252423" stroke-width=".8"/>
<text x="1781" y="250.500" style="fill:#3b3a39" textLength="38" lengthAdjust="spacingAndGlyphs">Sheet1</text>

<!-- status bar -->
<path d="M0 1007.500H1913" stroke="#e1dfdd"/>
<text x="-2" y="1021" style="font-size:11.500px;fill:#3b3a39" textLength="59" lengthAdjust="spacingAndGlyphs">Page 1 of 1</text>
<path d="M1702 1019.500H1706" stroke="#605e5c" stroke-width="1.500"/>
<path d="M1711 1019.500H1811" stroke="#605e5c" stroke-width="1"/>
<rect x="1760" y="1014" width="4" height="11" fill="#5b6664"/>
<path d="M1817 1019.500H1825M1821 1015.500V1023.500" stroke="#605e5c" stroke-width="1"/>
<text x="1838" y="1020" style="fill:#605e5c;font-size:11.500px" textLength="29" lengthAdjust="spacingAndGlyphs">104%</text>
<rect x="1881" y="1014.500" width="15" height="11.500" fill="none" stroke="#605e5c"/><path d="M1884 1020V1017H1887M1890 1017H1893V1020M1893 1021V1023.500H1890M1887 1023.500H1884V1021" fill="none" stroke="#605e5c"/>

<!-- bottom strip -->
<rect y="1031" width="1913" height="1" fill="#1a1a1a"/>
<rect y="1032" width="1913" height="4" fill="#2a2050"/>

<!-- watermark -->
<text x="842" y="940" style="font-family:'DejaVu Sans',sans-serif;font-size:72px;font-weight:700;fill:#d4d4d4;stroke:#d4d4d4;stroke-width:3" textLength="230" lengthAdjust="spacingAndGlyphs">مستقل</text>
<text x="842" y="996" style="font-size:36px;font-weight:700;fill:#dcdbda" textLength="230" lengthAdjust="spacingAndGlyphs">mostaql.com</text>
</svg>
</body></html>
